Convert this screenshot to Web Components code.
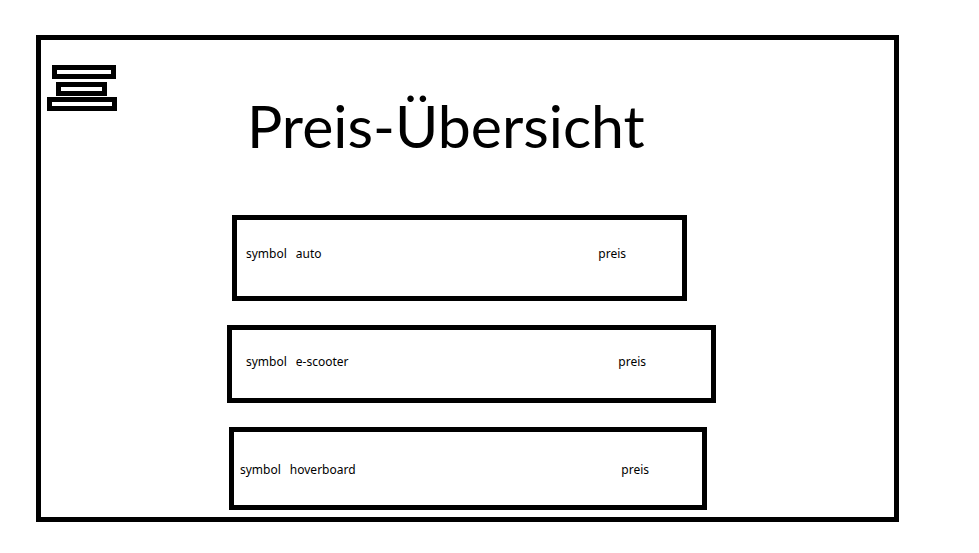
<!DOCTYPE html>
<html lang="de">
<head>
<meta charset="utf-8">
<meta name="viewport" content="width=device-width, initial-scale=1">
<title>Preis-Übersicht</title>
<style>
  body { margin: 0; background: #fff; color: #000; font-family: "Noto Sans", "Open Sans", sans-serif; }
  price-row.auto { --inset: 0 207px 0 191px; --pad: 26px 56px 34px 9px; }
  price-row.scooter { --inset: 0 178px 0 186px; --pad: 24px 65px 28px 14px; }
  price-row.hover { --inset: 0 187px 0 188px; --pad: 30px 53px 27px 6px; }
</style>
</head>
<body>
<page-frame>
  <menu-button slot="menu"></menu-button>
  <page-title slot="title">Preis-Übersicht</page-title>
  <price-list>
    <price-row class="auto"><span slot="symbol">symbol</span><span>auto</span><span slot="price">preis</span></price-row>
    <price-row class="scooter"><span slot="symbol">symbol</span><span>e-scooter</span><span slot="price">preis</span></price-row>
    <price-row class="hover"><span slot="symbol">symbol</span><span>hoverboard</span><span slot="price">preis</span></price-row>
  </price-list>
</page-frame>

<script>
  class ShadowElement extends HTMLElement {
    constructor() {
      super();
      this.attachShadow({ mode: "open" }).innerHTML = this.constructor.markup;
    }
  }

  customElements.define("page-frame", class extends ShadowElement {
    static markup = `
      <style>
        :host { display: block; padding: 35px 80px 31px 36px; }
        main { border: 5px solid #000; padding: 25px 0 7px; }
        header { display: grid; grid-template-columns: 76px 1fr; padding: 0 0 0 6px; }
      </style>
      <main>
        <header><slot name="menu"></slot><slot name="title"></slot></header>
        <slot></slot>
      </main>`;
  });

  customElements.define("menu-button", class extends ShadowElement {
    static markup = `
      <style>
        :host { display: block; }
        button { display: block; margin: 0; padding: 0; border: 0; background: none; color: inherit; cursor: pointer; }
        svg { display: block; }
      </style>
      <button type="button" aria-label="Menü">
        <svg width="70" height="46" viewBox="0 0 70 46" aria-hidden="true" shape-rendering="crispEdges">
          <path fill="currentColor" fill-rule="evenodd" d="M5 0H69V14H5ZM10 5V9H64V5ZM9 17H60V31H9ZM14 22V26H55V22ZM0 32H70V46H0ZM5 37V41H65V37Z"/>
        </svg>
      </button>`;
  });

  customElements.define("page-title", class extends ShadowElement {
    static markup = `
      <style>
        :host { display: block; padding: 21px 0 49px 124px; }
        h1 { margin: 0; font: 400 59px/80px Lato, "Noto Sans", sans-serif; white-space: nowrap; }
      </style>
      <h1><slot></slot></h1>`;
  });

  customElements.define("price-list", class extends ShadowElement {
    static markup = `
      <style>:host { display: flex; flex-direction: column; gap: 24px; }</style>
      <slot></slot>`;
    connectedCallback() { this.setAttribute("role", "list"); }
  });

  customElements.define("price-row", class extends ShadowElement {
    static markup = `
      <style>
        :host {
          display: flex; align-items: center; gap: 9px;
          margin: var(--inset); padding: var(--pad);
          border: 5px solid #000;
          font-size: 12px; line-height: 16px;
        }
        .price { margin-left: auto; }
      </style>
      <slot name="symbol"></slot>
      <slot></slot>
      <div class="price"><slot name="price"></slot></div>`;
    connectedCallback() { this.setAttribute("role", "listitem"); }
  });
</script>
</body>
</html>
